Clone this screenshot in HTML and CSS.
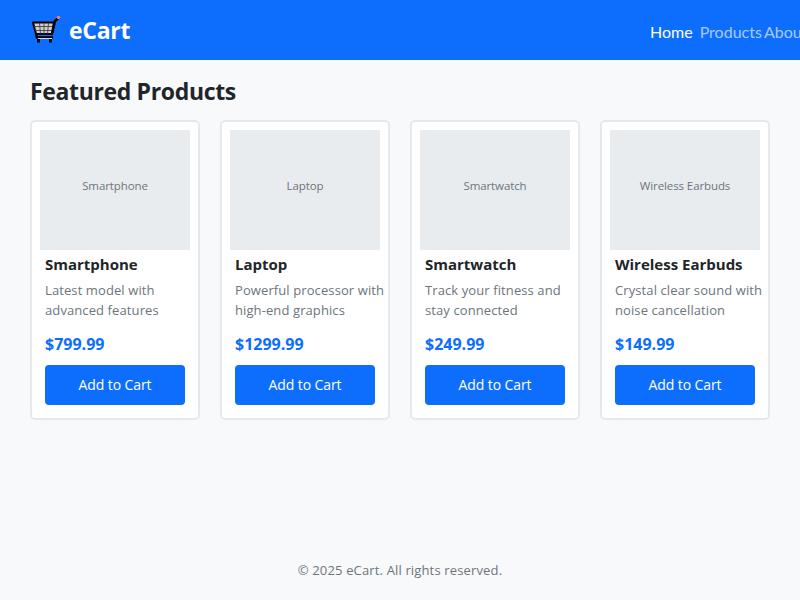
FILE: index.html

```html
<!DOCTYPE html>
<html>
<head>
    <title>eCart</title>
    <link rel="stylesheet" href="styles.css">
</head>
<body>
    <header class="topbar">
        <div class="logo">
            <svg class="logo-icon" width="32" height="32" viewBox="0 0 32 32">
                <path d="M3 8.500h21l-2 11.500H6z" fill="#cfcfcf" stroke="#000" stroke-width="2" stroke-linejoin="round"/>
                <path d="M4 12.500h19M5 16.500h17M9.500 9l1 11M14 9v11M18.500 9l-1 11" stroke="#333" stroke-width="0.800" fill="none"/>
                <path d="M22 20l3-13 3.500-3" stroke="#000" stroke-width="2.500" fill="none" stroke-linecap="round"/>
                <path d="M6 20l1 3.500h16" stroke="#000" stroke-width="2.500" fill="none"/>
                <path d="M8 24.500h14" stroke="#ddd" stroke-width="1"/>
                <circle cx="28.500" cy="3.500" r="1.800" fill="#f47c6c"/>
                <path d="M8.500 25v3.500M20.500 25v3.500" stroke="#000" stroke-width="3"/>
            </svg>
            <span class="logo-text">eCart</span>
        </div>
        <nav class="nav">
            <a class="nav-link active" href="#">Home</a>
            <a class="nav-link tight" href="#">Products</a>
            <a class="nav-link" href="#">About</a>
        </nav>
    </header>

    <main class="content">
        <h1 class="title">Featured Products</h1>
        <div class="products">
            <div class="card">
                <div class="thumb">Smartphone</div>
                <div class="info">
                    <h3 class="name">Smartphone</h3>
                    <p class="desc">Latest model with advanced features</p>
                    <div class="price">$799.99</div>
                    <button class="buy">Add to Cart</button>
                </div>
            </div>
            <div class="card">
                <div class="thumb">Laptop</div>
                <div class="info">
                    <h3 class="name">Laptop</h3>
                    <p class="desc">Powerful processor with high-end graphics</p>
                    <div class="price">$1299.99</div>
                    <button class="buy">Add to Cart</button>
                </div>
            </div>
            <div class="card">
                <div class="thumb">Smartwatch</div>
                <div class="info">
                    <h3 class="name">Smartwatch</h3>
                    <p class="desc">Track your fitness and stay connected</p>
                    <div class="price">$249.99</div>
                    <button class="buy">Add to Cart</button>
                </div>
            </div>
            <div class="card">
                <div class="thumb">Wireless Earbuds</div>
                <div class="info">
                    <h3 class="name">Wireless Earbuds</h3>
                    <p class="desc">Crystal clear sound with noise cancellation</p>
                    <div class="price">$149.99</div>
                    <button class="buy">Add to Cart</button>
                </div>
            </div>
        </div>
    </main>

    <footer class="footer">© 2025 eCart. All rights reserved.</footer>
</body>
</html>
```

FILE: styles.css

```css
html, body {
    height: 600px;
    overflow: hidden;
}

body {
    margin: 0;
    font-family: "Open Sans", sans-serif;
    background: #f8f9fa;
    color: #212529;
    display: flex;
    flex-direction: column;
}

.topbar {
    height: 60px;
    flex: none;
    background: #0d6efd;
    display: flex;
    align-items: center;
    justify-content: space-between;
    padding: 0 0 0 30px;
}

.logo {
    display: flex;
    align-items: center;
    gap: 8px;
    color: white;
    font-size: 23px;
    font-weight: 700;
    letter-spacing: -0.3px;
}

.logo-text {
    margin-left: -1px;
}

.nav {
    display: flex;
    flex: none;
    width: 150px;
    padding-top: 2px;
    font-family: Lato, sans-serif;
    font-size: 16px;
    white-space: nowrap;
}

.nav-link {
    color: rgba(255, 255, 255, 0.65);
    text-decoration: none;
    margin-right: 7px;
}

.nav-link.tight {
    margin-right: 2px;
}

.nav-link.active {
    color: white;
}

.content {
    flex: 1;
    padding: 15px 30px 0;
}

.title {
    margin: 0 0 12px;
    font-size: 23px;
    line-height: 33px;
    font-weight: 700;
    letter-spacing: -0.35px;
}

.products {
    display: flex;
    gap: 20px;
}

.card {
    width: 170px;
    height: 300px;
    flex: none;
    box-sizing: border-box;
    background: white;
    border: 2px solid #e6e9ec;
    border-radius: 5px;
    padding: 8px;
}

.thumb {
    height: 120px;
    background: #e9ecef;
    color: #6c757d;
    font-size: 11.5px;
    letter-spacing: -0.1px;
    display: flex;
    align-items: center;
    justify-content: center;
    padding-bottom: 9px;
    box-sizing: border-box;
}

.info {
    padding: 3px 5px;
    width: 160px;
}

.name {
    margin: 0 0 5px;
    font-size: 15px;
    line-height: 22px;
    font-weight: 700;
}

.desc {
    margin: 0 0 14px;
    width: 152px;
    font-size: 13px;
    line-height: 20px;
    letter-spacing: 0.1px;
    color: #6c757d;
}

.price {
    font-size: 16px;
    line-height: 20px;
    font-weight: 700;
    color: #0d6efd;
    margin-bottom: 11px;
}

.buy {
    display: block;
    width: 140px;
    height: 40px;
    border: none;
    border-radius: 4px;
    background: #0d6efd;
    color: white;
    font-family: "Open Sans", sans-serif;
    font-size: 14px;
    letter-spacing: -0.1px;
    padding: 0 0 1px;
}

.footer {
    height: 60px;
    flex: none;
    text-align: center;
    font-size: 13px;
    line-height: 60px;
    letter-spacing: 0.15px;
    color: #6c757d;
}
```
